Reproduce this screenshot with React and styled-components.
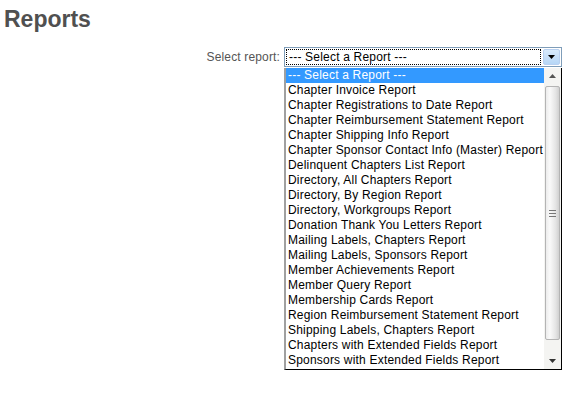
import React from 'react';
import styled, { createGlobalStyle } from 'styled-components';

const GlobalStyle = createGlobalStyle`
    html, body {
        margin: 0;
        padding: 0;
        background: #fff;
    }
    body {
        font-family: "Liberation Sans", Arial, sans-serif;
    }
`;

const Page = styled.div`
    width: 586px;
    height: 393px;
    padding: 6px 0 0 4px;
    box-sizing: border-box;
`;

const Title = styled.h2`
    margin: 0;
    font-size: 23px;
    font-weight: bold;
    color: #505050;
    line-height: 27px;
`;

const FormRow = styled.div`
    display: flex;
    align-items: center;
    margin-top: 14px;
`;

const Label = styled.label`
    width: 276px;
    padding-right: 4px;
    text-align: right;
    font-size: 12px;
    letter-spacing: 0.15px;
    color: #555;
`;

const SelectWrap = styled.div`
    position: relative;
    width: 278px;
    height: 20px;
`;

const SelectBox = styled.div`
    display: flex;
    height: 100%;
    box-sizing: border-box;
    border: 1px solid #7f9db9;
    background: #fff;
`;

const SelectValue = styled.div`
    flex: 1;
    margin: 1px;
    border: 1px dotted #000;
    padding-left: 2px;
    font-size: 12px;
    letter-spacing: 0.2px;
    line-height: 14px;
    color: #000;
`;

const DropButton = styled.div`
    width: 15px;
    margin: 1px;
    display: flex;
    align-items: center;
    justify-content: center;
    border: 1px solid #b8d0f0;
    border-radius: 2px;
    background: linear-gradient(#d8eafc, #b6d6f6);
`;

const Popup = styled.div`
    position: absolute;
    top: 21px;
    left: 0;
    width: 278px;
    height: 302px;
    box-sizing: border-box;
    display: flex;
    background: #fff;
    border-left: 2px solid #a0a0a0;
    border-right: 1px solid #000;
    border-bottom: 1px solid #000;
`;

const List = styled.ul`
    flex: 1;
    margin: 0;
    padding: 0;
    list-style: none;
`;

const Option = styled.li`
    height: 15px;
    line-height: 15px;
    padding-left: 2px;
    font-size: 12px;
    letter-spacing: 0.2px;
    white-space: nowrap;
    color: ${p => (p.selected ? '#fff' : '#000')};
    background: ${p => (p.selected ? '#3399ff' : 'transparent')};
`;

const Scrollbar = styled.div`
    width: 17px;
    display: flex;
    flex-direction: column;
    background: #f4f4f2;
`;

const ScrollButton = styled.div`
    height: 16px;
    display: flex;
    align-items: center;
    justify-content: center;
`;

const Track = styled.div`
    flex: 1;
    padding: 2px 1px 13px;
    display: flex;
`;

const Thumb = styled.div`
    flex: 1;
    box-sizing: border-box;
    border: 1px solid #b4b4b4;
    border-radius: 2px;
    background: linear-gradient(to right, #ececec, #fafafa 30%, #e4e4e4 75%, #d0d0d0);
    display: flex;
    align-items: center;
    justify-content: center;
`;

const Arrow = ({ up, color = '#000' }) => (
    <svg width="7" height="4" viewBox="0 0 7 4">
        {up
            ? <path d="M0 4 L7 4 L3.5 0 Z" fill={color} />
            : <path d="M0 0 L7 0 L3.5 4 Z" fill={color} />}
    </svg>
);

const Grip = () => (
    <svg width="7" height="7" viewBox="0 0 7 7">
        <rect x="0" y="0" width="7" height="1" fill="#777" />
        <rect x="0" y="3" width="7" height="1" fill="#777" />
        <rect x="0" y="6" width="7" height="1" fill="#777" />
    </svg>
);

const reports = [
    '--- Select a Report ---',
    'Chapter Invoice Report',
    'Chapter Registrations to Date Report',
    'Chapter Reimbursement Statement Report',
    'Chapter Shipping Info Report',
    'Chapter Sponsor Contact Info (Master) Report',
    'Delinquent Chapters List Report',
    'Directory, All Chapters Report',
    'Directory, By Region Report',
    'Directory, Workgroups Report',
    'Donation Thank You Letters Report',
    'Mailing Labels, Chapters Report',
    'Mailing Labels, Sponsors Report',
    'Member Achievements Report',
    'Member Query Report',
    'Membership Cards Report',
    'Region Reimbursement Statement Report',
    'Shipping Labels, Chapters Report',
    'Chapters with Extended Fields Report',
    'Sponsors with Extended Fields Report',
];

const App = () => (
    <>
        <GlobalStyle />
        <Page>
            <Title>Reports</Title>
            <FormRow>
                <Label>Select report:</Label>
                <SelectWrap>
                    <SelectBox>
                        <SelectValue>{reports[0]}</SelectValue>
                        <DropButton><Arrow /></DropButton>
                    </SelectBox>
                    <Popup>
                        <List>
                            {reports.map((name, index) => (
                                <Option key={name} selected={index === 0}>{name}</Option>
                            ))}
                        </List>
                        <Scrollbar>
                            <ScrollButton><Arrow up color="#555" /></ScrollButton>
                            <Track>
                                <Thumb><Grip /></Thumb>
                            </Track>
                            <ScrollButton><Arrow color="#333" /></ScrollButton>
                        </Scrollbar>
                    </Popup>
                </SelectWrap>
            </FormRow>
        </Page>
    </>
);

export default App;
